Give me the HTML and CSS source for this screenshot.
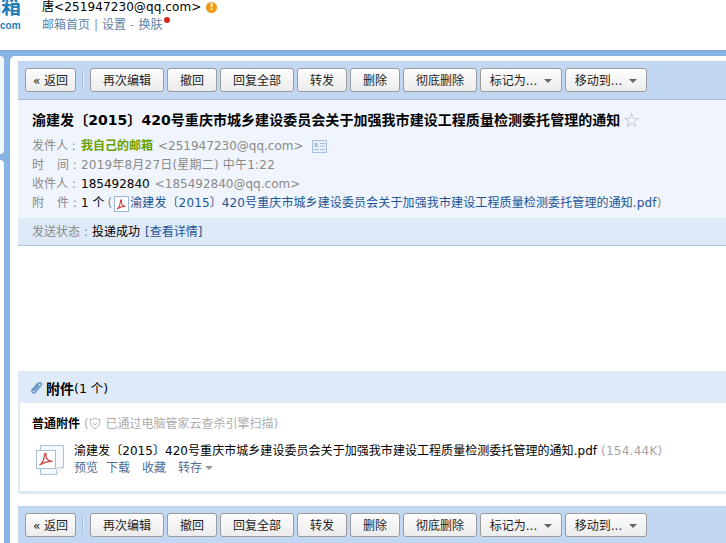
FILE: index.html
```
<!DOCTYPE html>
<html lang="zh">
<head>
<meta charset="utf-8">
<title>邮箱</title>
<link rel="stylesheet" href="styles.css">
</head>
<body>
<header class="top">
  <div class="logo"><span class="logo-cn">邮箱</span><span class="logo-en">com</span></div>
  <div class="user">
    <div class="user-name"><span>唐&lt;251947230@qq.com&gt;</span><span class="warn">!</span></div>
    <div class="user-links"><a>邮箱首页</a><i class="bar">|</i><a>设置</a><i class="dash">-</i><a>换肤</a><span class="dot"></span></div>
  </div>
</header>
<div class="frame">
  <div class="side"><div class="side-a"></div><div class="side-b"></div></div>
  <main class="panel">
    <div class="toolbar">
      <button class="btn b-back">« 返回</button><span class="sep"></span>
      <button class="btn b4">再次编辑</button><button class="btn b2">撤回</button><button class="btn b4">回复全部</button><button class="btn b2">转发</button><button class="btn b2">删除</button><button class="btn b4">彻底删除</button><button class="btn bm">标记为...<span class="caret"></span></button><button class="btn bm">移动到...<span class="caret"></span></button>
    </div>
    <section class="info">
      <h1 class="subject">渝建发〔2015〕420号重庆市城乡建设委员会关于加强我市建设工程质量检测委托管理的通知<span class="star">☆</span></h1>
      <div class="row"><span class="lab">发件人 :</span><b class="me">我自己的邮箱</b><span class="gray addr">&lt;251947230@qq.com&gt;</span>
        <svg class="card" width="15" height="13" viewBox="0 0 15 13"><rect x=".5" y=".5" width="14" height="12" fill="#e6eef8" stroke="#a9bfd8"/><rect x="2.500" y="3" width="3" height="4" fill="#a9bfd8"/><path d="M2 9.500h5M8 3.500h5M8 6h5M8 9.500h5" stroke="#a9bfd8"/></svg></div>
      <div class="row"><span class="lab">时<i class="sp"></i>间 :</span><span class="gray date">2019年8月27日(星期二) 中午1:22</span></div>
      <div class="row"><span class="lab">收件人 :</span><span class="blk">185492840</span><span class="gray addr">&lt;185492840@qq.com&gt;</span></div>
      <div class="row"><span class="lab">附<i class="sp"></i>件 :</span><span class="blk">1 个</span><span class="gray paren">(</span>
        <svg class="pdf-s" width="15" height="16" viewBox="0 0 15 16"><rect x=".5" y=".5" width="14" height="15" fill="#fff" stroke="#9db6d6"/><path d="M3 13c2-1 3-4 3.500-8 .2-2 1.500-1.500 1 1-.3 2 1.500 4 4 4.500-3-.5-6 .5-8.500 2.500z" fill="none" stroke="#d0453f" stroke-width="1.100"/></svg><a class="link file">渝建发〔2015〕420号重庆市城乡建设委员会关于加强我市建设工程质量检测委托管理的通知.pdf</a><span class="gray">)</span></div>
    </section>
    <div class="status"><span class="lab">发送状态 :</span><span class="blk">投递成功</span><a class="link detail">[查看详情]</a></div>
    <div class="body-space"></div>
    <div class="att-head">
      <svg class="clip" width="14" height="16" viewBox="0 0 14 16"><path d="M9 3 3.500 9.500c-2 2.500 1 4.500 3 2.500L12 5.500c1.500-2-.8-3.800-2.500-2L4.500 9.300c-.8 1 .3 1.800 1.200.9L10 5" fill="none" stroke="#6f9ac8" stroke-width="1.500"/></svg>
      <b>附件</b><span class="att-count">(1 个)</span>
    </div>
    <section class="att-box">
      <div class="att-title"><b>普通附件</b><span class="scan">(<svg class="shield" width="12" height="13" viewBox="0 0 12 13"><path d="M6 1c1.500 1 3 1.400 5 1.400 0 4.500-1.500 7.600-5 9.600-3.500-2-5-5.100-5-9.600C3 2.400 4.500 2 6 1z" fill="none" stroke="#b4b4b4"/><path d="M3.800 5.500 6 8l2.200-2.500" fill="none" stroke="#b4b4b4"/></svg> 已通过电脑管家云查杀引擎扫描)</span></div>
      <div class="att-item">
        <svg class="pdf-l" width="30" height="32" viewBox="0 0 30 32"><path d="M4.500 1.500h23v22l-7 7h-16z" fill="#f4f8fd" stroke="#a7bfdc"/><path d="M20.500 30.500c.5-3 0-6 1-6.500 2-.5 4 0 6-.5" fill="#fff" stroke="#a7bfdc"/><rect x=".5" y="6.500" width="19" height="18" fill="#fff" stroke="#a7bfdc"/><path d="M3.500 21c3-1.500 4.500-5.500 5-10 .2-2.500 2-2 1.500 1-.3 2.500 2 5 6.500 5.500-4.500-.5-9 1-13 3.500z" fill="none" stroke="#cf4b48" stroke-width="1.300"/></svg>
        <div class="att-text">
          <div class="att-name">渝建发〔2015〕420号重庆市城乡建设委员会关于加强我市建设工程质量检测委托管理的通知.pdf <span class="size">(154.44K)</span></div>
          <div class="att-acts"><a>预览</a><a>下载</a><a>收藏</a><a>转存<span class="caret small"></span></a></div>
        </div>
      </div>
    </section>
    <div class="toolbar foot">
      <button class="btn b-back">« 返回</button><span class="sep"></span>
      <button class="btn b4">再次编辑</button><button class="btn b2">撤回</button><button class="btn b4">回复全部</button><button class="btn b2">转发</button><button class="btn b2">删除</button><button class="btn b4">彻底删除</button><button class="btn bm">标记为...<span class="caret"></span></button><button class="btn bm">移动到...<span class="caret"></span></button>
    </div>
  </main>
</div>
</body>
</html>
```
FILE: styles.css
```
* { box-sizing: border-box; }
html, body { margin: 0; padding: 0; }
body {
  width: 726px; height: 543px; overflow: hidden; background: #fff;
  font: 12px/18px "DejaVu Sans", "Noto Sans CJK SC", sans-serif; color: #000;
}
a { color: #1e5494; }
i { font-style: normal; }
.top { height: 50px; display: flex; overflow: hidden; }
.logo { width: 42px; flex: none; overflow: hidden; display: flex; flex-direction: column; align-items: flex-end; padding-right: 21px; color: #1f7db8; font-weight: bold; white-space: nowrap; }
.logo-cn { font-size: 20px; line-height: 20px; height: 20px; margin-top: -3px; flex: none; }
.logo-en { font: bold 10px/12px "Liberation Sans", sans-serif; margin-top: 3px; align-self: flex-start; }
.user-name { display: flex; align-items: center; height: 14px; letter-spacing: .1px; }
.warn { width: 11px; height: 11px; border-radius: 50%; background: #f09a13; color: #fff; font-size: 9px; line-height: 11px; text-align: center; font-weight: bold; margin-left: 5px; }
.user-links { margin-top: 2px; line-height: 18px; display: flex; color: #7a97b8; }
.user-links a { color: #5c83a8; }
.bar { margin: 0 4px 0 4px; }
.dash { margin: 0 4px; }
.dot { width: 6px; height: 6px; border-radius: 50%; background: #d02a22; margin: 1px 0 0 2px; }
.frame { height: 493px; background: #88b3e5; border-top: 1px solid #7ea6d8; display: flex; padding-top: 5px; }
.side { width: 4px; margin-right: 6px; display: flex; flex-direction: column; gap: 6px; }
.side-a { height: 98px; background: #f2f7fd; border-radius: 0 5px 5px 0; }
.side-b { flex: 1; background: #fff; border-radius: 0 5px 0 0; }
.panel { flex: 1; min-width: 0; background: #fff; border-radius: 5px 0 0 0; padding: 5px 0 0 8px; overflow: hidden; }
.toolbar { height: 39px; background: #c1d7f2; border-bottom: 1px solid #a9bfd8; display: flex; align-items: flex-start; padding: 7px 0 0 7px; gap: 3px; }
.foot { height: 37px; border-bottom: 0; margin-top: 12px; }
.btn { height: 24px; padding: 1px 0 0; border: 1px solid #9b9b9b; border-radius: 3px; background: linear-gradient(#fdfdfd, #ececec); font: 12px/22px "DejaVu Sans", "Noto Sans CJK SC", sans-serif; color: #222; display: flex; align-items: center; justify-content: center; }
.b-back { width: 51px; }
.sep { width: 2px; height: 18px; background: #a9bfd8; margin: 3px 3px 0 3px; border-right: 1px solid #dbe7f6; }
.b4 { width: 74px; }
.b2 { width: 50px; }
.bm { width: 82px; }
.caret { width: 0; height: 0; border: 4px solid transparent; border-top: 4px solid #666; border-bottom: 0; margin-left: 7px; }
.caret.small { display: inline-block; border-top-color: #999; margin-left: 3px; vertical-align: 2px; }
.info { height: 118px; background: #f0f5fd; padding: 9px 0 0 14px; }
.subject { margin: 0 0 6px; font-size: 14px; line-height: 22px; font-weight: bold; letter-spacing: .05px; display: flex; align-items: center; white-space: nowrap; }
.star { color: #b8b8b8; font-weight: normal; font-size: 20px; margin-left: 2px; }
.row { height: 19px; line-height: 19px; white-space: nowrap; display: flex; align-items: center; }
.lab { color: #8a8a8a; display: inline-block; width: 49px; }
.sp { display: inline-block; width: 13px; }
.me { color: #6aa000; font-weight: bold; }
.gray { color: #8a8a8a; }
.date { letter-spacing: .2px; }
.addr { margin-left: 5px; }
.card { margin-left: 8px; }
.paren { margin-left: 3px; }
.pdf-s { margin: 0 1px 0 2px; }
.link { color: #1e5494; }
.file { letter-spacing: .12px; }
.status { height: 28px; background: #dfeaf8; border-bottom: 1px solid #a9c3e2; padding: 0 0 0 14px; display: flex; align-items: center; }
.status .lab { width: 60px; }
.detail { margin-left: 5px; }
.body-space { height: 125px; }
.att-head { height: 32px; background: #dfeaf8; display: flex; align-items: center; padding: 3px 0 0 11px; font-size: 12.5px; }
.att-head b { font-size: 14px; }
.clip { margin-right: 3px; margin-top: -2px; }
.att-box { height: 91px; border: 2px solid #dfeaf8; border-width: 0 0 3px 2px; padding: 12px 0 0 12px; }
.att-title { line-height: 18px; white-space: nowrap; }
.scan { color: #adadad; margin-left: 4px; }
.shield { vertical-align: -2px; margin-right: 1px; }
.att-item { display: flex; margin-top: 9px; margin-left: 4px; white-space: nowrap; }
.pdf-l { margin-right: 8px; margin-top: 2px; }
.att-name { line-height: 18px; letter-spacing: .05px; }
.size { color: #a5a5a5; letter-spacing: .25px; }
.att-acts { display: flex; gap: 12px; line-height: 16px; margin-top: 0; }
.att-acts a { color: #4a6d99; }
.att-acts a:first-child { margin-right: -4px; }
```
